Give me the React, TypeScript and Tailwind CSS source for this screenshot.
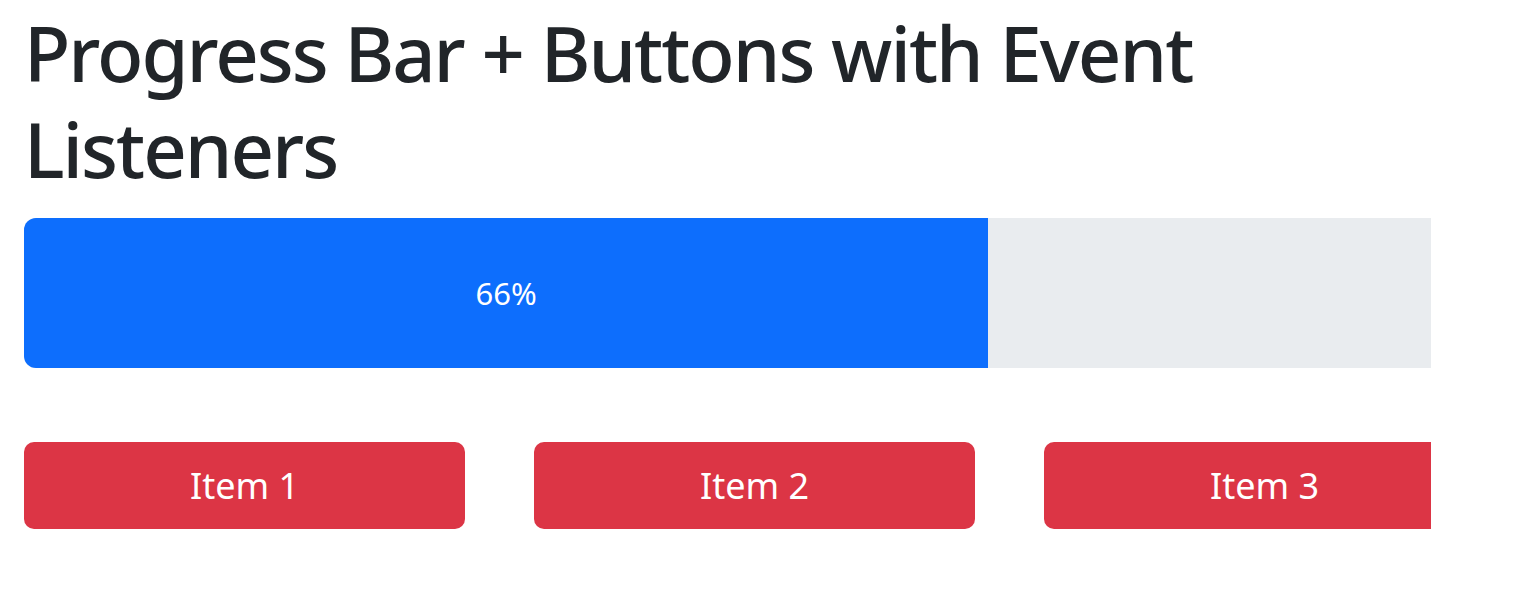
const items = ["Item 1", "Item 2", "Item 3"];

export default function App() {
    const progress = 66;

    return (
        <div className="w-[1431px] overflow-hidden bg-white pl-[24px] text-[#212529] [font-family:'Noto_Sans',sans-serif]">
            <div className="w-[1461px]">
                <h1 className="mt-[5px] mb-[21px] text-[76px] leading-[96px] font-medium tracking-[-2px]">
                    Progress Bar + Buttons with Event
                    <br />
                    Listeners
                </h1>

                {/* progress */}
                <div className="flex h-[150px] overflow-hidden rounded-[12px] bg-[#e9ecef]">
                    <div
                        className="flex items-center justify-center bg-[#0d6efd] text-[31px] text-white"
                        style={{ width: `${progress}%` }}
                    >
                        {progress}%
                    </div>
                </div>

                {/* buttons */}
                <div className="mt-[74px] grid grid-cols-3 gap-[69px]">
                    {items.map((item) => (
                        <button
                            key={item}
                            className="h-[87px] rounded-[10px] bg-[#dc3545] text-[36px] text-white"
                        >
                            {item}
                        </button>
                    ))}
                </div>
            </div>
        </div>
    );
}
